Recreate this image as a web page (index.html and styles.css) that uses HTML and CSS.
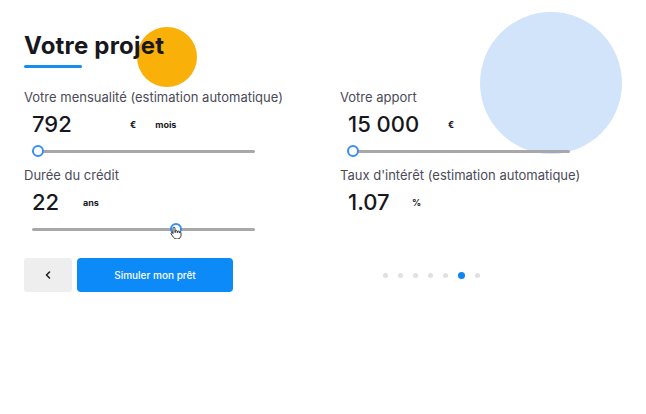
FILE: index.html
```html
<!DOCTYPE html>
<html>
<head>
	<title>Votre projet</title>
	<meta charset="utf-8">
	<link rel="stylesheet" href="styles.css">
</head>
<body>
	<div class="page">
		<div class="blob-blue"></div>

		<div class="head">
			<span class="blob-orange"></span>
			<h1 class="title">Votre projet</h1>
			<div class="underline"></div>
		</div>

		<div class="grid">
			<div class="field">
				<div class="label">Votre mensualité (estimation automatique)</div>
				<div class="value">
					<span class="num num-792">792</span>
					<span class="unit">€</span>
					<span class="unit unit-far">mois</span>
				</div>
				<div class="slider"><div class="track"></div><div class="thumb thumb-start"></div></div>
			</div>

			<div class="field">
				<div class="label">Votre apport</div>
				<div class="value">
					<span class="num num-apport">15 000</span>
					<span class="unit">€</span>
				</div>
				<div class="slider slider-right"><div class="track"></div><div class="thumb thumb-edge"></div></div>
			</div>

			<div class="field">
				<div class="label">Durée du crédit</div>
				<div class="value">
					<span class="num num-22">22</span>
					<span class="unit">ans</span>
				</div>
				<div class="slider">
					<div class="track"></div>
					<div class="thumb thumb-mid"></div>
					<svg class="hand" width="12" height="13" viewBox="0 0 12 13">
						<path d="M4 1.2c.6 0 1 .4 1 1v4.3h.3V5.3c0-.5.4-.9 1-.9s.9.4.9.9v1.3h.2V6c0-.5.4-.9.9-.9s.9.4.9.9v.8h.1c0-.5.4-.8.9-.8s.8.4.8.9v2.6c0 1.9-1.5 3.4-3.4 3.4H6.2c-1 0-1.9-.5-2.5-1.3L1.2 8.1c-.3-.4-.2-1 .2-1.3.4-.3 1-.2 1.3.2L3 7.5V2.2c0-.6.4-1 1-1z" fill="#fff" stroke="#222" stroke-width=".9"/>
					</svg>
				</div>
			</div>

			<div class="field">
				<div class="label">Taux d'intérêt (estimation automatique)</div>
				<div class="value">
					<span class="num num-taux">1.07</span>
					<span class="unit">%</span>
				</div>
			</div>
		</div>

		<div class="actions">
			<button class="btn-back">
				<svg width="10" height="10" viewBox="0 0 10 10"><path d="M6.5 2 3.5 5l3 3" fill="none" stroke="#222" stroke-width="1.6" stroke-linecap="round" stroke-linejoin="round"/></svg>
			</button>
			<button class="btn-main">Simuler mon prêt</button>
			<div class="dots">
				<span class="dot"></span>
				<span class="dot"></span>
				<span class="dot"></span>
				<span class="dot"></span>
				<span class="dot"></span>
				<span class="dot active"></span>
				<span class="dot"></span>
			</div>
		</div>
	</div>
</body>
</html>
```
FILE: styles.css
```css
body{
	margin: 0;
	background: #fff;
	font-family: Inter, "Open Sans", sans-serif;
	color: #1b1b22;
}

.page{
	position: relative;
	width: 646px;
	height: 414px;
	padding: 31px 0 0 24px;
	box-sizing: border-box;
	overflow: hidden;
}

.blob-blue{
	position: absolute;
	left: 480px;
	top: 12px;
	width: 142px;
	height: 142px;
	border-radius: 50%;
	background: #d2e4fa;
}

.head{
	position: relative;
}
.blob-orange{
	position: absolute;
	left: 113px;
	top: -4px;
	width: 60px;
	height: 60px;
	border-radius: 50%;
	background: #f9b008;
}
.title{
	position: relative;
	margin: 0;
	font-size: 24px;
	line-height: 30px;
	font-weight: 700;
	letter-spacing: 0.2px;
	color: #17171d;
}
.underline{
	position: relative;
	width: 58px;
	height: 3px;
	margin-top: 4px;
	background: #1a8cf0;
	border-radius: 2px;
}

.grid{
	position: relative;
	display: grid;
	grid-template-columns: 316px 1fr;
	row-gap: 10px;
	margin-top: 21px;
}

.label{
	font-size: 13px;
	line-height: 16px;
	color: #4b4b58;
}
.value{
	display: flex;
	align-items: center;
	height: 28px;
	margin-top: 5px;
	padding-left: 8px;
}
.num{
	font-size: 22px;
	font-weight: 500;
	color: #17171d;
}
.num-792{ width: 98px; }
.num-apport{ width: 100px; }
.num-22{ width: 51px; }
.num-taux{ width: 64px; }
.unit{
	font-size: 9px;
	font-weight: 700;
	color: #17171d;
}
.unit-far{
	margin-left: 19px;
}

.slider{
	position: relative;
	height: 12px;
	margin-top: 7px;
	margin-left: 8px;
	width: 223px;
}
.slider-right{
	margin-left: 12px;
	width: 218px;
}
.track{
	position: absolute;
	left: 0;
	right: 0;
	top: 5px;
	height: 3px;
	background: #a8a8ab;
	border-radius: 2px;
}
.thumb{
	position: absolute;
	top: 0;
	width: 8px;
	height: 8px;
	border: 2px solid #3a8ef0;
	border-radius: 50%;
	background: #fff;
}
.thumb-start{ left: 0; }
.thumb-edge{ left: -5px; }
.thumb-mid{ left: 138px; }
.hand{
	position: absolute;
	left: 138px;
	top: 3px;
}

.actions{
	position: relative;
	display: flex;
	align-items: center;
	margin-top: 23px;
}
.btn-back{
	width: 48px;
	height: 34px;
	border: 0;
	border-radius: 3px;
	background: #eeeeef;
	display: flex;
	align-items: center;
	justify-content: center;
	padding: 0;
}
.btn-main{
	width: 156px;
	height: 34px;
	margin-left: 5px;
	border: 0;
	border-radius: 4px;
	background: #0c8af7;
	color: #fff;
	font-family: Inter, "Open Sans", sans-serif;
	font-size: 10px;
	font-weight: 500;
}
.dots{
	display: flex;
	align-items: center;
	gap: 10px;
	margin-left: 150px;
}
.dot{
	width: 5px;
	height: 5px;
	border-radius: 50%;
	background: #e0e0e2;
}
.dot.active{
	width: 7px;
	height: 7px;
	background: #0c84f2;
}
```
